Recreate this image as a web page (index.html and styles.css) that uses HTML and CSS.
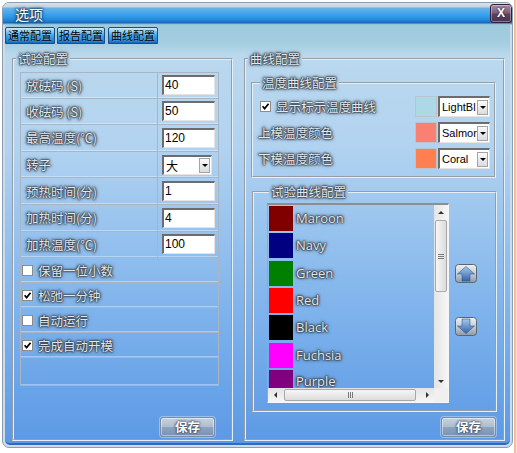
FILE: index.html
```html
<!DOCTYPE html>
<html lang="zh-CN">
<head>
<meta charset="utf-8">
<title>选项</title>
<link rel="stylesheet" href="styles.css">
</head>
<body>
<div class="window">
  <div class="titlebar">
    <span class="title">选项</span>
    <span class="close">X</span>
  </div>
  <div class="client">
    <div class="tabs">
      <span class="tab t1">通常配置</span>
      <span class="tab t2">报告配置</span>
      <span class="tab t3">曲线配置</span>
    </div>
    <div class="panels">
      <fieldset class="group left">
        <legend class="glow">试验配置</legend>
        <div class="table">
          <div class="trow"><span class="lab glow">放砝码 (S)</span><span class="val"><span class="input">40</span></span></div>
          <div class="trow"><span class="lab glow">收砝码 (S)</span><span class="val"><span class="input">50</span></span></div>
          <div class="trow"><span class="lab glow">最高温度(℃)</span><span class="val"><span class="input">120</span></span></div>
          <div class="trow"><span class="lab glow">转子</span><span class="val"><span class="select small"><span class="stxt">大</span><span class="sarrow"><i></i></span></span></span></div>
          <div class="trow"><span class="lab glow">预热时间(分)</span><span class="val"><span class="input">1</span></span></div>
          <div class="trow"><span class="lab glow">加热时间(分)</span><span class="val"><span class="input">4</span></span></div>
          <div class="trow"><span class="lab glow">加热温度(℃)</span><span class="val"><span class="input">100</span></span></div>
          <div class="crow"><span class="cb"></span><span class="glow">保留一位小数</span></div>
          <div class="crow"><span class="cb"><svg viewBox="0 0 10 10" width="10" height="10"><path d="M1.8 4.8 L4 7.4 L8.4 2" fill="none" stroke="#000" stroke-width="1.9"/></svg></span><span class="glow">松弛一分钟</span></div>
          <div class="crow"><span class="cb"></span><span class="glow">自动运行</span></div>
          <div class="crow"><span class="cb"><svg viewBox="0 0 10 10" width="10" height="10"><path d="M1.8 4.8 L4 7.4 L8.4 2" fill="none" stroke="#000" stroke-width="1.9"/></svg></span><span class="glow">完成自动开模</span></div>
          <div class="erow"></div>
        </div>
        <div class="actions la"><span class="btn">保存</span></div>
      </fieldset>

      <fieldset class="group right">
        <legend class="glow">曲线配置</legend>
        <fieldset class="group sub temp">
          <legend class="glow">温度曲线配置</legend>
          <div class="srow"><span class="cb"><svg viewBox="0 0 10 10" width="10" height="10"><path d="M1.8 4.8 L4 7.4 L8.4 2" fill="none" stroke="#000" stroke-width="1.9"/></svg></span><span class="glow slab">显示标示温度曲线</span><span class="swatch c-lightblue"></span><span class="select wide"><span class="stxt">LightBl</span><span class="sarrow"><i></i></span></span></div>
          <div class="srow"><span class="glow">上模温度颜色</span><span class="swatch c-salmon"></span><span class="select wide"><span class="stxt">Salmor</span><span class="sarrow"><i></i></span></span></div>
          <div class="srow"><span class="glow">下模温度颜色</span><span class="swatch c-coral"></span><span class="select wide"><span class="stxt">Coral</span><span class="sarrow"><i></i></span></span></div>
        </fieldset>
        <fieldset class="group sub curves">
          <legend class="glow">试验曲线配置</legend>
          <div class="curves-body">
            <div class="listbox">
              <div class="items">
                <div class="item"><span class="isw c-maroon"></span><span class="glow iname">Maroon</span></div>
                <div class="item"><span class="isw c-navy"></span><span class="glow iname">Navy</span></div>
                <div class="item"><span class="isw c-green"></span><span class="glow iname">Green</span></div>
                <div class="item"><span class="isw c-red"></span><span class="glow iname">Red</span></div>
                <div class="item"><span class="isw c-black"></span><span class="glow iname">Black</span></div>
                <div class="item"><span class="isw c-fuchsia"></span><span class="glow iname">Fuchsia</span></div>
                <div class="item last"><span class="isw c-purple"></span><span class="glow iname">Purple</span></div>
              </div>
              <div class="vscroll">
                <span class="arr up"></span>
                <span class="vthumb"><i class="grip"></i></span>
                <span class="arr down"></span>
              </div>
              <div class="hscroll">
                <span class="arr left"></span>
                <span class="hthumb"><i class="hgrip"></i></span>
                <span class="arr rightarr"></span>
              </div>
              <div class="corner"></div>
            </div>
            <div class="movebtns">
              <svg class="mbtn" viewBox="0 0 22 19" width="22" height="19">
                <defs>
                  <linearGradient id="mbg" x1="0" y1="0" x2="0" y2="1"><stop offset="0" stop-color="#eef1f4"/><stop offset=".5" stop-color="#c6cdd6"/><stop offset="1" stop-color="#8e9aa8"/></linearGradient>
                  <linearGradient id="mar" x1="0" y1="0" x2="0" y2="1"><stop offset="0" stop-color="#a8c8ec"/><stop offset="1" stop-color="#3464a4"/></linearGradient>
                </defs>
                <rect x=".5" y=".5" width="21" height="18" rx="3" fill="url(#mbg)" stroke="#5a6672"/>
                <path d="M11 2.5 L19.5 10 L15 10 L15 17 L7 17 L7 10 L2.5 10 Z" fill="url(#mar)" stroke="#2c5a94" stroke-width=".6"/>
              </svg>
              <svg class="mbtn" viewBox="0 0 22 19" width="22" height="19">
                <rect x=".5" y=".5" width="21" height="18" rx="3" fill="url(#mbg)" stroke="#5a6672"/>
                <path d="M7 2 L15 2 L15 9 L19.5 9 L11 16.5 L2.5 9 L7 9 Z" fill="url(#mar)" stroke="#2c5a94" stroke-width=".6"/>
              </svg>
            </div>
          </div>
        </fieldset>
        <div class="actions ra"><span class="btn">保存</span></div>
      </fieldset>
    </div>
  </div>
</div>
</body>
</html>
```

FILE: styles.css
```css
* { box-sizing: border-box; }
html, body { margin: 0; padding: 0; }
body {
  width: 517px;
  height: 453px;
  overflow: hidden;
  background: linear-gradient(to right, #ffffff 0, #ffffff 514px, #eeb493 514px, #f2c9b0 516px, #f6f6f6 517px);
  font-family: "Noto Sans CJK SC", "Noto Sans", sans-serif;
}

.window {
  margin: 2px 0 0 2px;
  width: 511px;
  height: 446px;
  border: 1px solid #8a9db2;
  border-radius: 7px 7px 7px 7px;
  background: #cfdce7;
  display: flex;
  flex-direction: column;
  overflow: hidden;
}

/* title bar */
.titlebar {
  flex: none;
  height: 22px;
  display: flex;
  justify-content: space-between;
  align-items: flex-start;
  background: linear-gradient(#d6e2ec 0, #c6d5e2 4px, #6db0e2 5px, #4aaaf0 9px, #2e98e8 14px, #2080d4 18px, #1864b4 20px, #86bcd8 21px, #9ec8dc 22px);
}
.title {
  margin-top: 2px;
  padding-left: 12px;
  font-size: 14px;
  line-height: 19px;
  color: #ffffff;
  text-shadow: 0 0 2px #14304e, 0 0 3px #14304e, 0 0 4px #2a4a70;
}
.close {
  width: 22px;
  height: 19px;
  margin-top: 1px;
  border: 1px solid #2e2232;
  border-radius: 3px;
  background: linear-gradient(#a58aa8 0, #7c5e80 45%, #5c4060 55%, #4a3250 100%);
  box-shadow: inset 0 0 0 1px rgba(255, 255, 255, 0.35);
  color: #fff;
  font: bold 12px/17px "Liberation Sans", sans-serif;
  text-align: center;
  text-shadow: 0 0 2px #201020;
}

/* client */
.client {
  flex: 1;
  margin: 0 2px 2px;
  display: flex;
  flex-direction: column;
  border-bottom: 2px solid #2f6cc0;
  border-radius: 0 0 5px 5px;
  background: linear-gradient(#9ecadc 0, #a4cde0 18px, #bad8ee 30px, #b2d3f0 120px, #93c0ee 220px, #75acea 320px, #5c99e5 100%);
}

.tabs {
  display: flex;
  gap: 2px;
  margin-top: 2px;
  height: 17px;
}
.tab {
  height: 17px;
  font-size: 11px;
  line-height: 15px;
  text-align: center;
  color: #000;
  border: 1px solid #1d4d86;
  border-radius: 2px 2px 0 0;
  background: linear-gradient(#c8ecfc 0, #80ccf4 25%, #36a4ee 50%, #2290e2 75%, #1468bc 100%);
  text-shadow: 0 0 2px rgba(255, 255, 255, 0.5);
}
.t1 { width: 50px; }
.t2 { width: 48px; }
.t3 { width: 50px; margin-left: 1px; }

.panels {
  flex: 1;
  display: flex;
  gap: 11px;
  padding: 7px 5px 2px 7px;
}

/* group boxes */
.group {
  margin: 0;
  padding: 0;
  min-width: 0;
  border: 2px groove #e6eef6;
  display: flex;
  flex-direction: column;
}
.group > legend {
  margin-left: 2px;
  padding: 0 2px;
  font-size: 12.5px;
  line-height: 15px;
}
.left { width: 221px; }
.right { width: 261px; }

.glow {
  color: #e2e8ee;
  text-shadow: 0 0 1px #2c3640, 0 0 2px #2c3640, 0 0 2px #2c3640, 0 0 3px #3c4650, 0 0 4px #5a6470;
}

/* left table */
.table {
  margin: 6px 0 0 6px;
  width: 199px;
  border-top: 1px solid #a9b5c2;
  border-left: 1px solid #a9b5c2;
  border-right: 1px solid #a9b5c2;
}
.trow, .crow, .erow {
  display: flex;
  align-items: center;
  border-bottom: 1px solid #a9b5c2;
  box-shadow: inset 0 -1px 0 rgba(255, 255, 255, 0.35);
}
.trow { height: 26.6px; align-items: stretch; }
.trow:first-child { height: 25.6px; }
.lab {
  width: 137px;
  border-right: 1px solid #a9b5c2;
  padding-left: 5px;
  font-size: 12.5px;
  display: flex;
  align-items: center;
}
.val {
  flex: 1;
  display: flex;
  align-items: center;
  padding-left: 4px;
}
.input {
  width: 53px;
  height: 20px;
  background: #fff;
  border-style: solid;
  border-width: 2px 1px 1px 2px;
  border-color: #6c6c6c #e4e4e4 #e4e4e4 #6c6c6c;
  font: 12px/16px "Liberation Sans", sans-serif;
  padding-left: 1px;
  color: #000;
}
.crow { height: 25px; padding-left: 1px; font-size: 12.5px; }
.crow .cb { margin-right: 5px; }
.erow { height: 28px; }

.cb {
  width: 11px;
  height: 11px;
  flex: none;
  background: #fff;
  border: 1px solid #8c8c8c;
  display: flex;
  align-items: center;
  justify-content: center;
}
.cb svg { display: block; width: 9px; height: 9px; }

/* select */
.select {
  display: flex;
  align-items: center;
  background: #fff;
  border-style: solid;
  border-width: 2px 1px 1px 2px;
  border-color: #6c6c6c #e4e4e4 #e4e4e4 #6c6c6c;
  font: 11px "Liberation Sans", sans-serif;
  color: #000;
}
.select.small { width: 50px; height: 20px; font-family: "Noto Sans CJK SC", sans-serif; font-size: 12px; }
.select.wide { width: 52px; height: 21px; margin-right: 4px; }
.stxt { flex: 1; padding-left: 2px; overflow: hidden; white-space: nowrap; }
.sarrow {
  width: 11px;
  height: 15px;
  margin-right: 1px;
  border: 1px solid #a4a4a4;
  background: linear-gradient(#fafafa, #dcdcdc);
  display: flex;
  align-items: center;
  justify-content: center;
}
.sarrow i {
  width: 0;
  height: 0;
  border-left: 3px solid transparent;
  border-right: 3px solid transparent;
  border-top: 3px solid #000;
}

/* buttons */
.actions {
  margin-top: auto;
  display: flex;
  justify-content: flex-end;
  padding-bottom: 2px;
}
.la { padding-right: 16px; }
.ra { padding-right: 7px; }
.btn {
  width: 55px;
  height: 20px;
  border: 1px solid #7c8ca4;
  border-radius: 3px;
  background: linear-gradient(#c6d2de 0, #aebed0 48%, #8da3bf 52%, #7a93b3 100%);
  box-shadow: inset 0 0 0 1px rgba(255, 255, 255, 0.45), 0 0 0 1px rgba(255, 255, 255, 0.35);
  color: #fff;
  font-size: 12.5px;
  font-weight: bold;
  line-height: 18px;
  text-align: center;
  text-shadow: 0 0 2px #2c3c52, 0 0 3px #2c3c52;
}

/* right panel */
.sub.temp { margin: 9px 7px 0 5px; padding: 6px 0 7px 5px; }
.srow {
  height: 21px;
  display: flex;
  align-items: center;
  font-size: 12.5px;
}
.srow + .srow { margin-top: 5px; }
.srow .cb { margin: 0 5px 0 2px; }
.swatch {
  margin-left: auto;
  margin-right: 1px;
  width: 22px;
  height: 21px;
  border: 1px solid #b8c4d0;
}
.c-lightblue { background: #add8e6; }
.c-salmon { background: #fa8072; }
.c-coral { background: #ff7f50; }
.c-maroon { background: #800000; }
.c-navy { background: #000080; }
.c-green { background: #008000; }
.c-red { background: #ff0000; }
.c-black { background: #000000; }
.c-fuchsia { background: #ff00ff; }
.c-purple { background: #800080; }

.sub.curves { margin: 6px 6px 0 6px; padding: 4px 0 7px 13px; }
.curves-body { display: flex; }
.listbox {
  width: 182px;
  height: 200px;
  display: grid;
  grid-template-columns: 1fr 14px;
  grid-template-rows: 1fr 14px;
  border-style: solid;
  border-width: 2px 1px 1px 1px;
  border-color: #8e8e8e #f6f6f6 #f6f6f6 #a6a6a6;
}
.items {
  overflow: hidden;
  padding: 1px 0 0 1px;
}
.item {
  height: 27.33px;
  display: flex;
  align-items: flex-start;
}
.item.last { height: 18px; overflow: hidden; }
.isw { width: 24px; height: 25px; flex: none; }
.iname {
  margin-left: 3px;
  font-family: "Open Sans", "Noto Sans", sans-serif;
  font-size: 13px;
  line-height: 25px;
}
.item.last .iname { line-height: 23px; }
.vscroll {
  background: linear-gradient(to right, #e4e4e4, #f6f6f6);
  display: flex;
  flex-direction: column;
  align-items: center;
}
.hscroll {
  background: linear-gradient(#e4e4e4, #f6f6f6);
  display: flex;
  align-items: center;
}
.corner { background: #f0f0f0; }
.arr { width: 14px; height: 14px; flex: none; display: flex; align-items: center; justify-content: center; }
.arr::after { content: ""; width: 0; height: 0; }
.arr.up::after { border-left: 3px solid transparent; border-right: 3px solid transparent; border-bottom: 3px solid #333; }
.arr.down { margin-top: auto; }
.arr.down::after { border-left: 3px solid transparent; border-right: 3px solid transparent; border-top: 3px solid #333; }
.arr.left::after { border-top: 3px solid transparent; border-bottom: 3px solid transparent; border-right: 3px solid #333; }
.arr.rightarr { margin-left: auto; }
.arr.rightarr::after { border-top: 3px solid transparent; border-bottom: 3px solid transparent; border-left: 3px solid #333; }
.vthumb {
  margin-top: 1px;
  width: 12px;
  height: 72px;
  border: 1px solid #a8a8a8;
  border-radius: 2px;
  background: linear-gradient(to right, #f6f6f6, #dcdcdc);
  display: flex;
  align-items: center;
  justify-content: center;
}
.grip {
  width: 6px;
  height: 5px;
  background: repeating-linear-gradient(#7a7a7a 0 1px, transparent 1px 2px);
}
.hthumb {
  margin-left: 2px;
  width: 132px;
  height: 12px;
  border: 1px solid #a8a8a8;
  border-radius: 2px;
  background: linear-gradient(#f6f6f6, #dcdcdc);
  display: flex;
  align-items: center;
  justify-content: center;
}
.hgrip {
  width: 5px;
  height: 6px;
  background: repeating-linear-gradient(to right, #7a7a7a 0 1px, transparent 1px 2px);
}
.movebtns {
  margin-left: 6px;
  padding-top: 61px;
  display: flex;
  flex-direction: column;
  gap: 34px;
}
.mbtn { display: block; }
```
